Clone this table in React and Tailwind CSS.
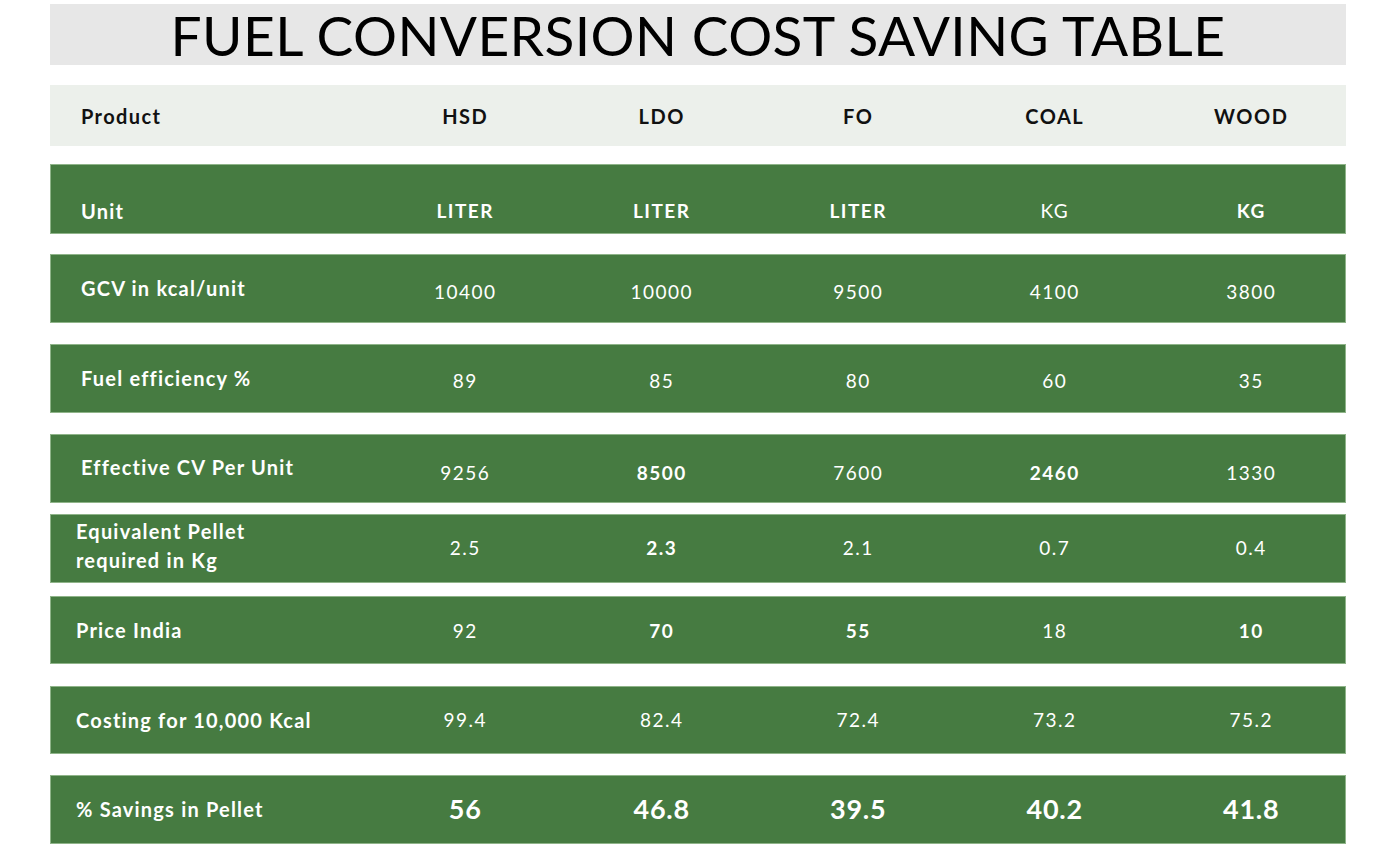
import React from "react";

const cols = ["HSD", "LDO", "FO", "COAL", "WOOD"];

const rows = [
  {
    label: "Unit",
    mt: "mt-[18px]",
    h: "h-[70px]",
    lpl: "pl-[30px]",
    lcls: "pt-[24px]",
    vcls: "pt-[24px]",
    values: [
      ["LITER", true],
      ["LITER", true],
      ["LITER", true],
      ["KG", false],
      ["KG", true],
    ],
  },
  {
    label: "GCV in kcal/unit",
    mt: "mt-[20px]",
    h: "h-[69px]",
    lpl: "pl-[30px]",
    lcls: "",
    vcls: "pt-[7px]",
    values: [
      ["10400", false],
      ["10000", false],
      ["9500", false],
      ["4100", false],
      ["3800", false],
    ],
  },
  {
    label: "Fuel efficiency %",
    mt: "mt-[21px]",
    h: "h-[69px]",
    lpl: "pl-[30px]",
    lcls: "",
    vcls: "pt-[5px]",
    values: [
      ["89", false],
      ["85", false],
      ["80", false],
      ["60", false],
      ["35", false],
    ],
  },
  {
    label: "Effective CV Per Unit",
    mt: "mt-[21px]",
    h: "h-[69px]",
    lpl: "pl-[30px]",
    lcls: "pb-[3px]",
    vcls: "pt-[9px]",
    values: [
      ["9256", false],
      ["8500", true],
      ["7600", false],
      ["2460", true],
      ["1330", false],
    ],
  },
  {
    label: "Equivalent Pellet\nrequired in Kg",
    mt: "mt-[11px]",
    h: "h-[69px]",
    lpl: "pl-[25px]",
    lcls: "pb-[6px]",
    vcls: "",
    values: [
      ["2.5", false],
      ["2.3", true],
      ["2.1", false],
      ["0.7", false],
      ["0.4", false],
    ],
  },
  {
    label: "Price India",
    mt: "mt-[13px]",
    h: "h-[68px]",
    lpl: "pl-[25px]",
    lcls: "",
    vcls: "pt-[2px]",
    values: [
      ["92", false],
      ["70", true],
      ["55", true],
      ["18", false],
      ["10", true],
    ],
  },
  {
    label: "Costing for 10,000 Kcal",
    mt: "mt-[22px]",
    h: "h-[68px]",
    lpl: "pl-[25px]",
    lcls: "",
    vcls: "",
    values: [
      ["99.4", false],
      ["82.4", false],
      ["72.4", false],
      ["73.2", false],
      ["75.2", false],
    ],
  },
  {
    label: "% Savings in Pellet",
    mt: "mt-[21px]",
    h: "h-[69px]",
    lpl: "pl-[25px]",
    lcls: "",
    vcls: "",
    big: true,
    values: [
      ["56", true],
      ["46.8", true],
      ["39.5", true],
      ["40.2", true],
      ["41.8", true],
    ],
  },
];

export default function App() {
  return (
    <div
      className="w-[1400px] h-[850px] bg-white overflow-hidden pt-[4px] pl-[50px]"
      style={{ fontFamily: "Lato, 'Noto Sans', sans-serif" }}
    >
      <div className="w-[1296px]">
        <div className="h-[61px] bg-[#e7e7e7] flex items-center justify-center">
          <h1 className="text-[55px] leading-none font-normal text-black tracking-[0.4px] pt-[2px]">
            FUEL CONVERSION COST SAVING TABLE
          </h1>
        </div>

        <div className="mt-[20px] h-[61px] bg-[#ecf0eb] grid grid-cols-[317px_repeat(5,196.5px)] items-center text-[#111]">
          <div className="pl-[31px] text-[20px] font-bold tracking-[1.4px]">Product</div>
          {cols.map((c) => (
            <div key={c} className="text-center text-[20px] font-bold tracking-[1.5px]">
              {c}
            </div>
          ))}
        </div>

        {rows.map((r) => (
          <div
            key={r.label}
            className={`${r.mt} ${r.h} bg-[#467b41] border border-[#8fb489] grid grid-cols-[316px_repeat(5,196.5px)] text-white`}
          >
            <div
              className={`${r.lpl} ${r.lcls} flex items-center text-[20px] font-bold tracking-[1.2px] leading-[29px] whitespace-pre-line`}
            >
              {r.label}
            </div>
            {r.values.map(([v, b], i) => (
              <div
                key={i}
                className={`${r.vcls} flex items-center justify-center ${
                  r.big ? "text-[27px] tracking-[0.8px]" : "text-[19px] tracking-[1.5px]"
                } ${b ? "font-bold" : "font-normal"}`}
              >
                {v}
              </div>
            ))}
          </div>
        ))}
      </div>
    </div>
  );
}
